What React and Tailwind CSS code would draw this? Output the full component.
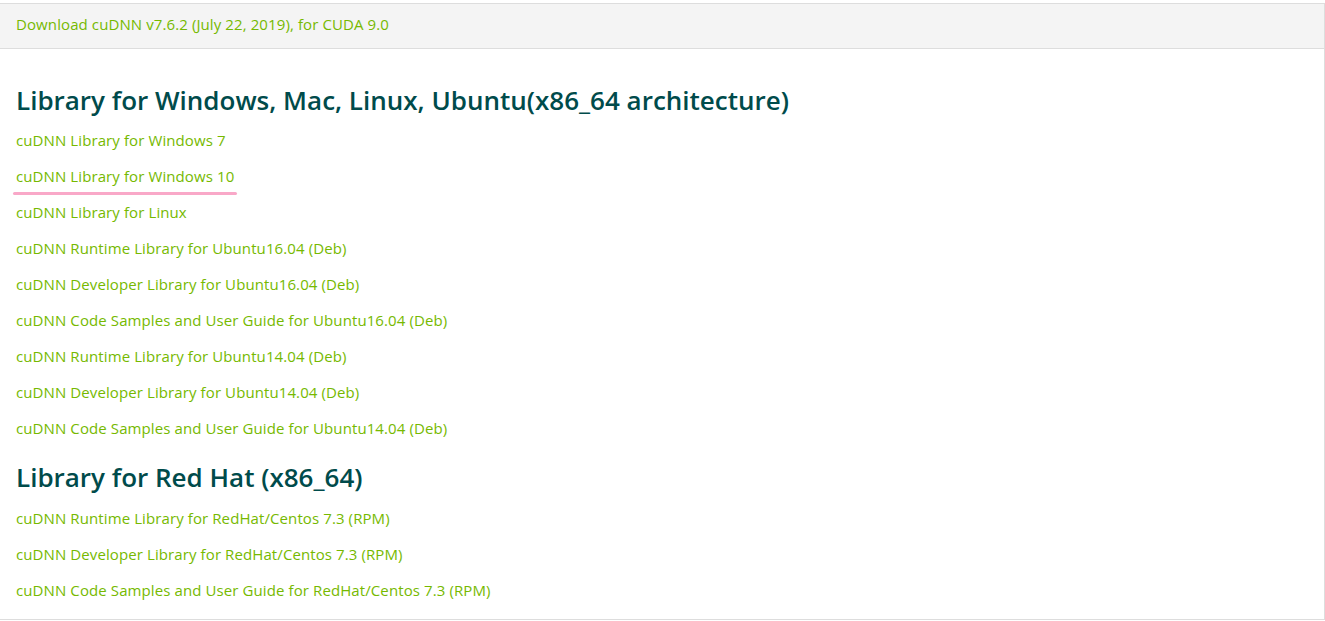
export default function App() {
  const win = [
    "cuDNN Library for Windows 7",
    "cuDNN Library for Windows 10",
    "cuDNN Library for Linux",
    "cuDNN Runtime Library for Ubuntu16.04 (Deb)",
    "cuDNN Developer Library for Ubuntu16.04 (Deb)",
    "cuDNN Code Samples and User Guide for Ubuntu16.04 (Deb)",
    "cuDNN Runtime Library for Ubuntu14.04 (Deb)",
    "cuDNN Developer Library for Ubuntu14.04 (Deb)",
    "cuDNN Code Samples and User Guide for Ubuntu14.04 (Deb)",
  ];
  const rh = [
    "cuDNN Runtime Library for RedHat/Centos 7.3 (RPM)",
    "cuDNN Developer Library for RedHat/Centos 7.3 (RPM)",
    "cuDNN Code Samples and User Guide for RedHat/Centos 7.3 (RPM)",
  ];
  const font = { fontFamily: '"Open Sans", "Noto Sans", sans-serif' };
  return (
    <div className="w-[1325px] h-[621px] bg-white pt-[3px]" style={font}>
      <div className="w-[1325px] h-[617px] border-t border-r border-b border-[#dddddd] flex flex-col">
        <div className="h-[45px] bg-[#f4f4f4] border-b border-[#dddddd] flex items-center pl-[16px] pb-[4px]">
          <span className="text-[15px] tracking-[0.1px] text-[#76b900]">Download cuDNN v7.6.2 (July 22, 2019), for CUDA 9.0</span>
        </div>
        <div className="pl-[16px] pt-[36px]">
          <h2 className="text-[26px] leading-[30px] font-semibold text-[#004b4b]">Library for Windows, Mac, Linux, Ubuntu(x86_64 architecture)</h2>
          <div className="flex flex-col mt-[7px]">
            {win.map((t, i) => (
              <div key={i} className="h-[36px] flex items-center">
                <span className="relative text-[15px] tracking-[0.1px] text-[#76b900]">
                  {t}
                  {i === 1 && (
                    <span className="absolute left-[-3px] right-[-3px] bottom-[-8px] h-[3px] rounded-full bg-[#f9a8c8]" />
                  )}
                </span>
              </div>
            ))}
          </div>
          <h2 className="mt-[16px] text-[26px] leading-[30px] font-semibold text-[#004b4b]">Library for Red Hat (x86_64)</h2>
          <div className="flex flex-col mt-[8px]">
            {rh.map((t, i) => (
              <div key={i} className="h-[36px] flex items-center">
                <span className="text-[15px] tracking-[0.1px] text-[#76b900]">{t}</span>
              </div>
            ))}
          </div>
        </div>
      </div>
    </div>
  );
}
